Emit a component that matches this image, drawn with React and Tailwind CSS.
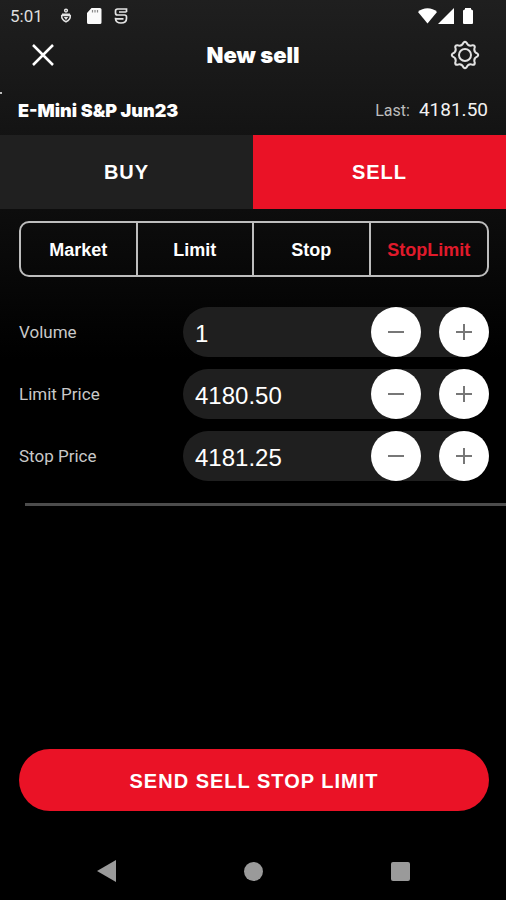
import { useState } from "react";

const toothCount = 8;

function gearPath() {
  const at = (radius, angle) => [
    (15 + radius * Math.cos(angle)).toFixed(2),
    (15 + radius * Math.sin(angle)).toFixed(2),
  ].join(" ");
  const pitch = (Math.PI * 2) / toothCount;
  let d = "";
  for (let i = 0; i < toothCount; i++) {
    const tip = -Math.PI / 2 + i * pitch;
    d += (i === 0 ? "M" : "L") + at(12.6, tip - pitch * 0.14);
    d += "Q" + at(13.8, tip) + " " + at(12.6, tip + pitch * 0.14);
    d += "Q" + at(8.6, tip + pitch / 2) + " " + at(12.6, tip + pitch * 0.86);
  }
  return d + "Z";
}

function StatusBar() {
  return (
    <div className="flex h-8 items-center justify-between pr-8 pl-[10px]">
      <div className="flex items-center">
        <span className="w-12 font-[Roboto,sans-serif] text-[17px] leading-8 text-[#dedede]">5:01</span>
        <svg width="16" height="16" viewBox="0 0 16 16" fill="none" stroke="#e4e4e4" strokeWidth="1.5" aria-hidden="true">
          <circle cx="8" cy="2.600" r="1.400" />
          <path d="M4 6.200h8M3.700 7.500h8.600c.3 3.200-1.500 5-4.300 6.300-2.800-1.300-4.600-3.100-4.300-6.300Z" />
          <path d="m5.800 9 2.200 3 2.200-3Z" fill="#e4e4e4" stroke="none" />
        </svg>
        <svg className="ml-3" width="16" height="16" viewBox="0 0 16 16" aria-hidden="true">
          <path d="M5.500 0H14a1.500 1.500 0 0 1 1.500 1.500v13A1.500 1.500 0 0 1 14 16H2.500A1.500 1.500 0 0 1 1 14.500V5Z" fill="#fafafa" />
          <path d="M6.500 2v2.500M9 2v2.500M11.500 2v2.500" stroke="#888" strokeWidth="1.200" />
        </svg>
        <svg className="ml-3" width="14" height="16" viewBox="0 0 14 16" fill="none" stroke="#e4e4e4" strokeWidth="1.700" aria-hidden="true">
          <path d="M12.500 4V1H3.500A2 2 0 0 0 1.500 3v2a2 2 0 0 0 2 2h7a2 2 0 0 1 2 2v1.500c0 2.700-2.200 4.500-5.500 4.500s-5.500-1.800-5.500-4.500V9.800M5 4h7.500M1.500 10.800h8" />
        </svg>
      </div>
      <svg width="56" height="16" viewBox="0 0 56 16" fill="#fff" aria-hidden="true">
        <path d="M0 4C5-1 14-1 19 4L9.500 15.500Z" />
        <path d="M36 0v16H20Z" />
        <path d="M47 0h6v1.200l2 1.300V15a1 1 0 0 1-1 1h-8a1 1 0 0 1-1-1V2.500l2-1.300Z" />
      </svg>
    </div>
  );
}

function StepperRow({ id, label, initial, step, digits }) {
  const [value, setValue] = useState(initial);
  const change = (delta) => setValue((Number(value) + delta).toFixed(digits));
  return (
    <div className="flex items-center">
      <label htmlFor={id} className="w-[164px] shrink-0 pt-[2px] font-[Roboto,sans-serif] text-[17px] text-[#c9c9c9]">{label}</label>
      <div className="flex h-[50px] min-w-0 flex-1 items-center rounded-full bg-[#1f1f1f]">
        <input
          id={id}
          value={value}
          onChange={(e) => setValue(e.target.value)}
          className="h-full min-w-0 flex-1 bg-transparent pt-[3px] pl-3 text-2xl text-white outline-none"
        />
        <div className="flex gap-[18px]">
          <button type="button" aria-label={"Decrease " + label} onClick={() => change(-step)} className="flex size-[50px] items-center justify-center rounded-full bg-white">
            <svg width="16" height="16" viewBox="0 0 16 16" stroke="#777" strokeWidth="2"><path d="M0 8h16" /></svg>
          </button>
          <button type="button" aria-label={"Increase " + label} onClick={() => change(step)} className="flex size-[50px] items-center justify-center rounded-full bg-white">
            <svg width="16" height="16" viewBox="0 0 16 16" stroke="#777" strokeWidth="2"><path d="M0 8h16M8 0v16" /></svg>
          </button>
        </div>
      </div>
    </div>
  );
}

const orderTypes = ["Market", "Limit", "Stop", "StopLimit"];

export default function App() {
  const [orderType, setOrderType] = useState("StopLimit");
  return (
    <div className="flex min-h-screen flex-col bg-black bg-linear-to-b/srgb from-[#1f1f1f] via-black via-40% to-black font-['Liberation_Sans',Arial,sans-serif] text-white">
      <StatusBar />
      <header className="grid h-[46px] grid-cols-3 items-center px-7">
        <button type="button" aria-label="Close" className="justify-self-start p-1">
          <svg width="22" height="22" viewBox="0 0 22 22" stroke="#fff" strokeWidth="2.500"><path d="m1 1 20 20M21 1 1 21" /></svg>
        </button>
        <h1 className="text-center font-[Inter,sans-serif] text-[22px] leading-7 font-black whitespace-nowrap">New sell</h1>
        <button type="button" aria-label="Settings" className="-mr-[2px] justify-self-end">
          <svg width="30" height="30" viewBox="0 0 30 30" fill="none" stroke="#e2e2e2" strokeWidth="2" strokeLinejoin="round">
            <path d={gearPath()} />
            <circle cx="15" cy="15" r="6" />
          </svg>
        </button>
      </header>
      <div className="relative flex h-[57px] items-center justify-between px-[18px] pt-2">
        <span className="absolute top-[14px] left-0 h-[2px] w-[2px] bg-[#bdbdbd]" />
        <h2 className="font-[Inter,sans-serif] text-[18px] font-black">E-Mini S&amp;P Jun23</h2>
        <p className="flex items-baseline gap-[9px] font-[Roboto,sans-serif]">
          <span className="text-[16px] text-[#bdbdbd]">Last:</span>
          <span className="text-[19px] text-[#f2f2f2]">4181.50</span>
        </p>
      </div>
      <div className="grid h-[74px] grid-cols-2 text-[20px] font-bold tracking-wider">
        <button type="button" className="bg-[#202020]">BUY</button>
        <button type="button" aria-pressed="true" className="bg-[#ea1226]">SELL</button>
      </div>
      <main className="flex flex-1 flex-col">
        <div className="mt-3 mr-[17px] ml-[19px] grid h-14 grid-cols-4 divide-x-2 divide-[#bdbdbd] overflow-hidden rounded-[10px] border-2 border-[#bdbdbd] text-[18px] font-bold">
          {orderTypes.map((type) => (
            <button
              key={type}
              type="button"
              aria-pressed={type === orderType}
              onClick={() => setOrderType(type)}
              className={type === orderType ? "pt-[2px] text-[#e01a2b]" : "pt-[2px] text-white"}
            >
              {type}
            </button>
          ))}
        </div>
        <div className="mt-[30px] flex flex-col gap-3 pr-[17px] pl-[19px]">
          <StepperRow id="volume" label="Volume" initial="1" step={1} digits={0} />
          <StepperRow id="limit-price" label="Limit Price" initial="4180.50" step={0.25} digits={2} />
          <StepperRow id="stop-price" label="Stop Price" initial="4181.25" step={0.25} digits={2} />
        </div>
        <hr className="mt-[22px] ml-[25px] border-t-3 border-[#4c4c4c]" />
        <button type="button" className="mt-auto mr-[17px] ml-[19px] h-[62px] rounded-full bg-[#ea1226] pt-[2px] text-[20px] font-bold tracking-wider">
          SEND SELL STOP LIMIT
        </button>
      </main>
      <nav className="mt-[31px] grid h-[58px] grid-cols-[1fr_80px_1fr] items-center px-24">
        <button type="button" aria-label="Back" className="justify-self-start">
          <svg width="20" height="22" viewBox="0 0 20 22" fill="#9a9a9a"><path d="M1 11 20 0v22Z" /></svg>
        </button>
        <button type="button" aria-label="Home" className="size-[19px] justify-self-center rounded-full bg-[#9a9a9a]" />
        <button type="button" aria-label="Recent apps" className="size-[19px] justify-self-end rounded-xs bg-[#9a9a9a]" />
      </nav>
    </div>
  );
}
